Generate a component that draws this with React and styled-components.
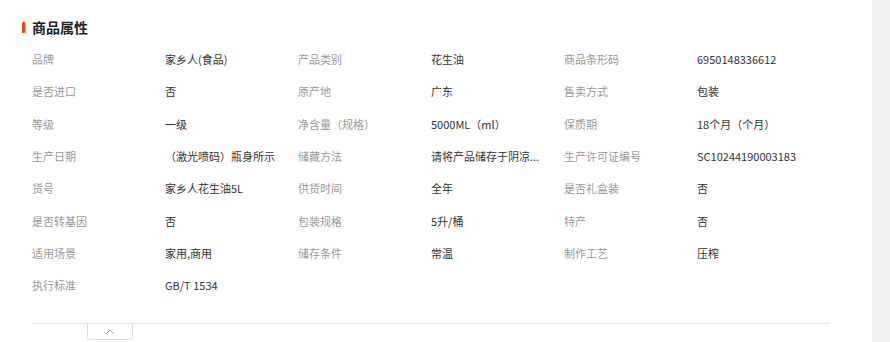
import React from 'react';
import styled, { createGlobalStyle } from 'styled-components';

const GlobalStyle = createGlobalStyle`
  html, body {
    margin: 0;
    padding: 0;
    background: #fff;
  }
  body {
    font-family: "Noto Sans CJK SC", "Noto Sans", sans-serif;
  }
`;

const Page = styled.div`
  display: flex;
  width: 890px;
  height: 342px;
  overflow: hidden;
`;

const Panel = styled.section`
  flex: 1;
  background: #fff;
  padding: 17px 0 0 22px;
`;

const Gutter = styled.div`
  width: 18px;
  background: #f1f1f1;
`;

const Title = styled.h3`
  display: flex;
  align-items: center;
  gap: 7px;
  margin: 0 0 6px;
  height: 20px;
  font-size: 14px;
  font-weight: bold;
  color: #222;

  &::before {
    content: '';
    width: 3px;
    height: 11px;
    background: #ff4400;
  }
`;

const Body = styled.div`
  margin-left: 10px;
  width: 798px;
`;

const Grid = styled.dl`
  display: grid;
  grid-template-columns: repeat(6, 133px);
  grid-auto-rows: 32.3px;
  margin: 0;
  font-size: 11px;
`;

const Label = styled.dt`
  display: flex;
  align-items: center;
  color: #999;
`;

const Value = styled.dd`
  display: flex;
  align-items: center;
  margin: 0;
  color: #333;
  white-space: nowrap;
`;

const Footer = styled.div`
  margin-top: 22px;
  border-top: 1px solid #e3e3e3;
  padding-left: 55px;
`;

const Toggle = styled.button`
  display: flex;
  align-items: center;
  justify-content: center;
  width: 46px;
  height: 16px;
  padding: 0;
  border: 1px solid #dcdcdc;
  border-top: none;
  border-radius: 0 0 4px 4px;
  background: #fff;
  color: #999;
  cursor: pointer;
`;

const attrs = [
  ['品牌', '家乡人(食品)'],
  ['产品类别', '花生油'],
  ['商品条形码', '6950148336612'],
  ['是否进口', '否'],
  ['原产地', '广东'],
  ['售卖方式', '包装'],
  ['等级', '一级'],
  ['净含量（规格）', '5000ML（ml）'],
  ['保质期', '18个月（个月）'],
  ['生产日期', '（激光喷码）瓶身所示'],
  ['储藏方法', '请将产品储存于阴凉...'],
  ['生产许可证编号', 'SC10244190003183'],
  ['货号', '家乡人花生油5L'],
  ['供货时间', '全年'],
  ['是否礼盒装', '否'],
  ['是否转基因', '否'],
  ['包装规格', '5升/桶'],
  ['特产', '否'],
  ['适用场景', '家用,商用'],
  ['储存条件', '常温'],
  ['制作工艺', '压榨'],
  ['执行标准', 'GB/T 1534'],
];

export default function App() {
  return (
    <Page>
      <GlobalStyle />
      <Panel>
        <Title>商品属性</Title>
        <Body>
          <Grid>
            {attrs.map(([k, v]) => (
              <React.Fragment key={k}>
                <Label>{k}</Label>
                <Value>{v}</Value>
              </React.Fragment>
            ))}
          </Grid>
          <Footer>
            <Toggle aria-label="收起">
              <svg width="8" height="5" viewBox="0 0 8 5" fill="none">
                <path d="M0.5 4.5L4 1L7.5 4.5" stroke="#999" strokeWidth="1" />
              </svg>
            </Toggle>
          </Footer>
        </Body>
      </Panel>
      <Gutter />
    </Page>
  );
}
